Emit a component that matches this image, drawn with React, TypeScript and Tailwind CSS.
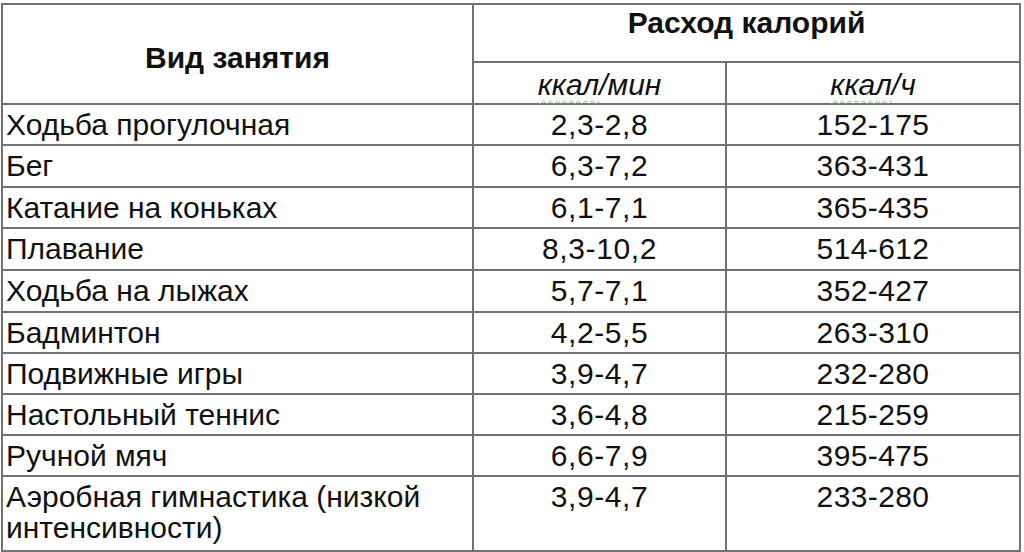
const rows: { name: string; perMin: string; perHour: string; h: string }[] = [
  { name: 'Ходьба прогулочная', perMin: '2,3-2,8', perHour: '152-175', h: 'h-[41px]' },
  { name: 'Бег', perMin: '6,3-7,2', perHour: '363-431', h: 'h-[42px]' },
  { name: 'Катание на коньках', perMin: '6,1-7,1', perHour: '365-435', h: 'h-[41px]' },
  { name: 'Плавание', perMin: '8,3-10,2', perHour: '514-612', h: 'h-[42px]' },
  { name: 'Ходьба на лыжах', perMin: '5,7-7,1', perHour: '352-427', h: 'h-[42px]' },
  { name: 'Бадминтон', perMin: '4,2-5,5', perHour: '263-310', h: 'h-[41px]' },
  { name: 'Подвижные игры', perMin: '3,9-4,7', perHour: '232-280', h: 'h-[41px]' },
  { name: 'Настольный теннис', perMin: '3,6-4,8', perHour: '215-259', h: 'h-[41px]' },
  { name: 'Ручной мяч', perMin: '6,6-7,9', perHour: '395-475', h: 'h-[41px]' },
  { name: 'Аэробная гимнастика (низкой интенсивности)', perMin: '3,9-4,7', perHour: '233-280', h: 'h-[75px]' },
];

const cell = 'border-r-2 border-b-2 border-[#727272]';

export default function App() {
  return (
    <div className="w-[1024px] h-[552px] bg-white overflow-hidden text-[#111] font-['Liberation_Sans',Arial,sans-serif]">
      <div className="ml-[1px] mt-[3px] w-[1020px] grid grid-cols-[471px_253px_294px] border-l-2 border-t-2 border-[#727272]">
        {/* Header */}
        <div className={`${cell} row-span-2 flex items-center justify-center text-[30px] leading-[31px] font-bold pt-[6px]`}>
          Вид занятия
        </div>
        <div className={`${cell} col-span-2 h-[58px] flex justify-center pt-[2px] text-[30px] font-bold leading-[31px]`}>
          Расход калорий
        </div>
        <div className={`${cell} h-[42px] flex items-center justify-center pt-[3px] text-[30px] leading-[31px] italic`}>
          <span>
            <span className="underline decoration-wavy decoration-[#79b679] decoration-1 underline-offset-[5px]">ккал</span>/мин
          </span>
        </div>
        <div className={`${cell} h-[42px] flex items-center justify-center pt-[3px] text-[30px] leading-[31px] italic`}>
          <span>
            <span className="underline decoration-wavy decoration-[#79b679] decoration-1 underline-offset-[5px]">ккал</span>/ч
          </span>
        </div>

        {/* Body */}
        {rows.map((r, i) => (
          <div key={i} className="contents">
            <div className={`${cell} ${r.h} pl-[3px] pt-[4px] text-[30px] leading-[31px]`}>{r.name}</div>
            <div className={`${cell} ${r.h} pt-[4px] text-center text-[30px] leading-[31px] tracking-[0.6px]`}>{r.perMin}</div>
            <div className={`${cell} ${r.h} pt-[4px] text-center text-[30px] leading-[31px] tracking-[0.4px]`}>{r.perHour}</div>
          </div>
        ))}
      </div>
    </div>
  );
}
